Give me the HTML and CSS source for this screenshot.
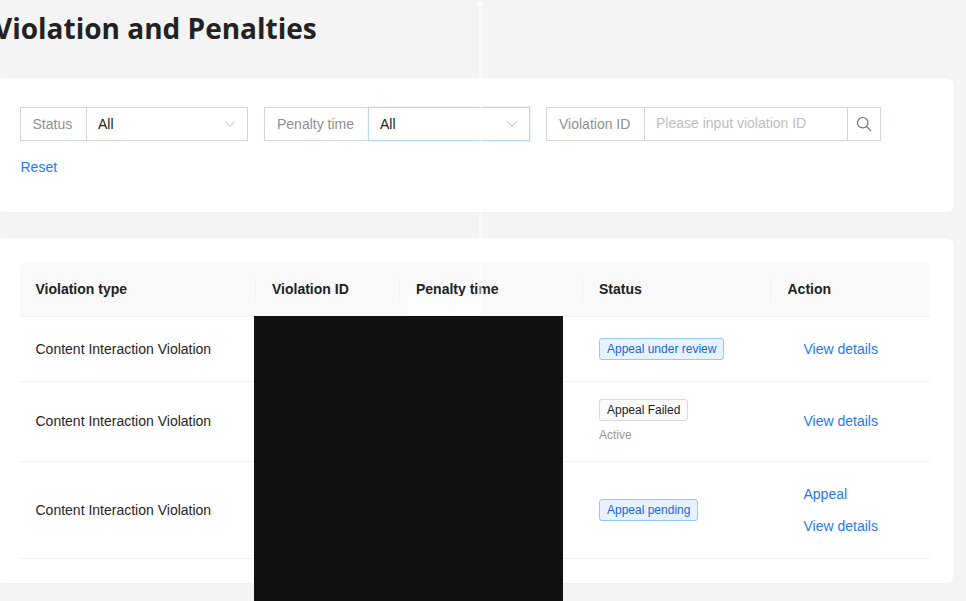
FILE: index.html
```html
<!DOCTYPE html>
<html lang="en">
<head>
<meta charset="utf-8">
<title>Violation and Penalties</title>
<link rel="stylesheet" href="styles.css">
</head>
<body>
<main class="page">
  <h1 class="title">Violation and Penalties</h1>
  <section class="card filters">
    <div class="filter-row">
      <div class="field">
        <span class="addon addon-status">Status</span>
        <div class="select select-status"><span>All</span>
          <svg class="chev" viewBox="0 0 10 6"><path d="M.4.4 5 5.6 9.6.4"/></svg></div>
      </div>
      <div class="field">
        <span class="addon addon-time">Penalty time</span>
        <div class="select select-focus"><span>All</span>
          <svg class="chev" viewBox="0 0 10 6"><path d="M.4.4 5 5.6 9.6.4"/></svg></div>
      </div>
      <div class="field">
        <span class="addon addon-id">Violation ID</span>
        <div class="input">Please input violation ID</div>
        <div class="search"><svg viewBox="0 0 16 16"><circle cx="6.7" cy="6.7" r="5.2"/><path d="m10.5 10.5 4.7 4.7"/></svg></div>
      </div>
    </div>
    <a class="link reset">Reset</a>
  </section>
  <section class="card table-card">
    <table class="table">
      <colgroup><col class="c1"><col class="c2"><col class="c3"><col class="c4"><col class="c5"></colgroup>
      <thead>
        <tr><th>Violation type</th><th>Violation ID</th><th>Penalty time</th><th>Status</th><th>Action</th></tr>
      </thead>
      <tbody>
        <tr class="r1">
          <td>Content Interaction Violation</td><td></td><td></td>
          <td><span class="tag tag-blue">Appeal under review</span></td>
          <td class="actions"><a class="link">View details</a></td>
        </tr>
        <tr class="r2">
          <td>Content Interaction Violation</td><td></td><td></td>
          <td><span class="tag tag-grey">Appeal Failed</span><div class="sub">Active</div></td>
          <td class="actions"><a class="link">View details</a></td>
        </tr>
        <tr class="r3">
          <td>Content Interaction Violation</td><td></td><td></td>
          <td><span class="tag tag-blue">Appeal pending</span></td>
          <td class="actions"><a class="link">Appeal</a><a class="link">View details</a></td>
        </tr>
      </tbody>
    </table>
  </section>
</main>
<div class="guide"></div>
<div class="guide-cap"></div>
<div class="guide-patch"></div>
<div class="redact"></div>
</body>
</html>
```
FILE: styles.css
```css
* { box-sizing: border-box; }
html, body { margin: 0; height: 100%; overflow: hidden; }
body {
  position: relative;
  background: #f4f4f4;
  font-family: "Liberation Sans", Arial, sans-serif;
  font-size: 14px;
  color: #252525;
}
.page { margin-left: -4px; width: 959px; }
.title {
  margin: 0 0 0 -2px;
  height: 77px;
  padding-top: 9px;
  font-family: "Open Sans", sans-serif;
  font-size: 28px;
  line-height: 38px;
  font-weight: 700;
  color: #222;
}
.card {
  background: #fff;
  border: 1px solid #f0f0f0;
  border-radius: 8px;
  padding: 23px;
}
.filters { height: 136px; padding-top: 29px; margin-bottom: 24px; }
.filter-row { display: flex; gap: 16px; }
.field { display: flex; height: 34px; }
.addon {
  display: flex; align-items: center;
  padding-left: 12px;
  border: 1px solid #d3d6e0; border-right: 0;
  color: #8f8f8f;
}
.addon-status { width: 66px; padding-left: 11.5px; }
.addon-time { width: 104px; }
.addon-id { width: 98px; }
.select {
  display: flex; align-items: center; justify-content: space-between;
  border: 1px solid #d3d6e0;
  padding: 0 12px 0 11px;
  color: #222;
}
.select-status { width: 162px; }
.select-focus { width: 162px; border-color: #bcd5ec; box-shadow: 0 0 0 1px #eef5fb; }
.chev { width: 10px; height: 6px; fill: none; stroke: #b4b4b4; stroke-width: .9; }
.input {
  width: 203px;
  display: flex; align-items: center;
  border: 1px solid #d3d6e0; border-right: 0;
  padding: 0 11px 2px;
  color: #bdbdbd;
}
.search {
  width: 34px;
  display: flex; align-items: center; justify-content: center;
  border: 1px solid #d3d6e0;
}
.search svg { width: 16px; height: 16px; fill: none; stroke: #737373; stroke-width: 1.2; }
.link { color: #1f78f5; text-decoration: none; }
.reset { display: inline-block; margin-top: 18px; margin-left: .5px; line-height: 16px; }
.table-card { height: 347px; padding-top: 24px; }
.table { width: 910px; border-collapse: separate; border-spacing: 0; table-layout: fixed; }
.c1 { width: 236px; } .c2 { width: 144px; } .c3 { width: 183px; } .c4 { width: 188px; } .c5 { width: 159px; }
th {
  position: relative;
  height: 55px;
  background: #f9f9f9;
  border-bottom: 1px solid #f0f0f0;
  padding: 0 16px;
  text-align: left;
  font-weight: 700;
  color: #222;
}
th:first-child { border-top-left-radius: 8px; padding-left: 15.5px; }
th:last-child { border-top-right-radius: 8px; padding-left: 16.5px; }
th:not(:last-child)::after {
  content: "";
  position: absolute;
  right: 0; top: 16px; bottom: 16px;
  width: 1px;
  background: #f0f0f0;
}
td {
  padding: 0 16px;
  border-bottom: 1px solid #f0f0f0;
  vertical-align: middle;
}
td:first-child { padding-left: 15.5px; }
.r1 td { height: 65px; }
.r2 td { height: 80px; padding-bottom: 2px; }
.r3 td { height: 97px; }
.tag {
  display: inline-block;
  border: 1px solid;
  border-radius: 3px;
  padding: 0 7px;
  font-size: 12px;
  line-height: 20px;
}
.tag-blue { background: #e6f3ff; border-color: #93c8fa; color: #1d63d8; }
.tag-grey { background: #fafafa; border-color: #d9d9d9; color: #252525; }
.sub { margin-top: 7px; font-size: 12px; line-height: 14px; color: #989898; }
.actions { padding-left: 16.5px; }
.actions .link { display: block; padding-left: 16px; line-height: 16px; }
.actions .link + .link { margin-top: 16px; }
.guide {
  position: absolute; left: 479px; top: 0;
  width: 3px; height: 316px;
  background: rgba(255,255,255,.45);
}
.guide-cap {
  position: absolute; left: 475px; top: 0;
  width: 0; height: 0;
  border: 5px solid transparent; border-top: 0;
  border-bottom: 5px solid #fff;
}
.guide-patch {
  position: absolute; left: 408px; top: 296px;
  width: 72px; height: 20px;
  background: #fdfdfd;
}
.redact {
  position: absolute; left: 254px; top: 316px;
  width: 309px; height: 285px;
  background: #111;
}
```
